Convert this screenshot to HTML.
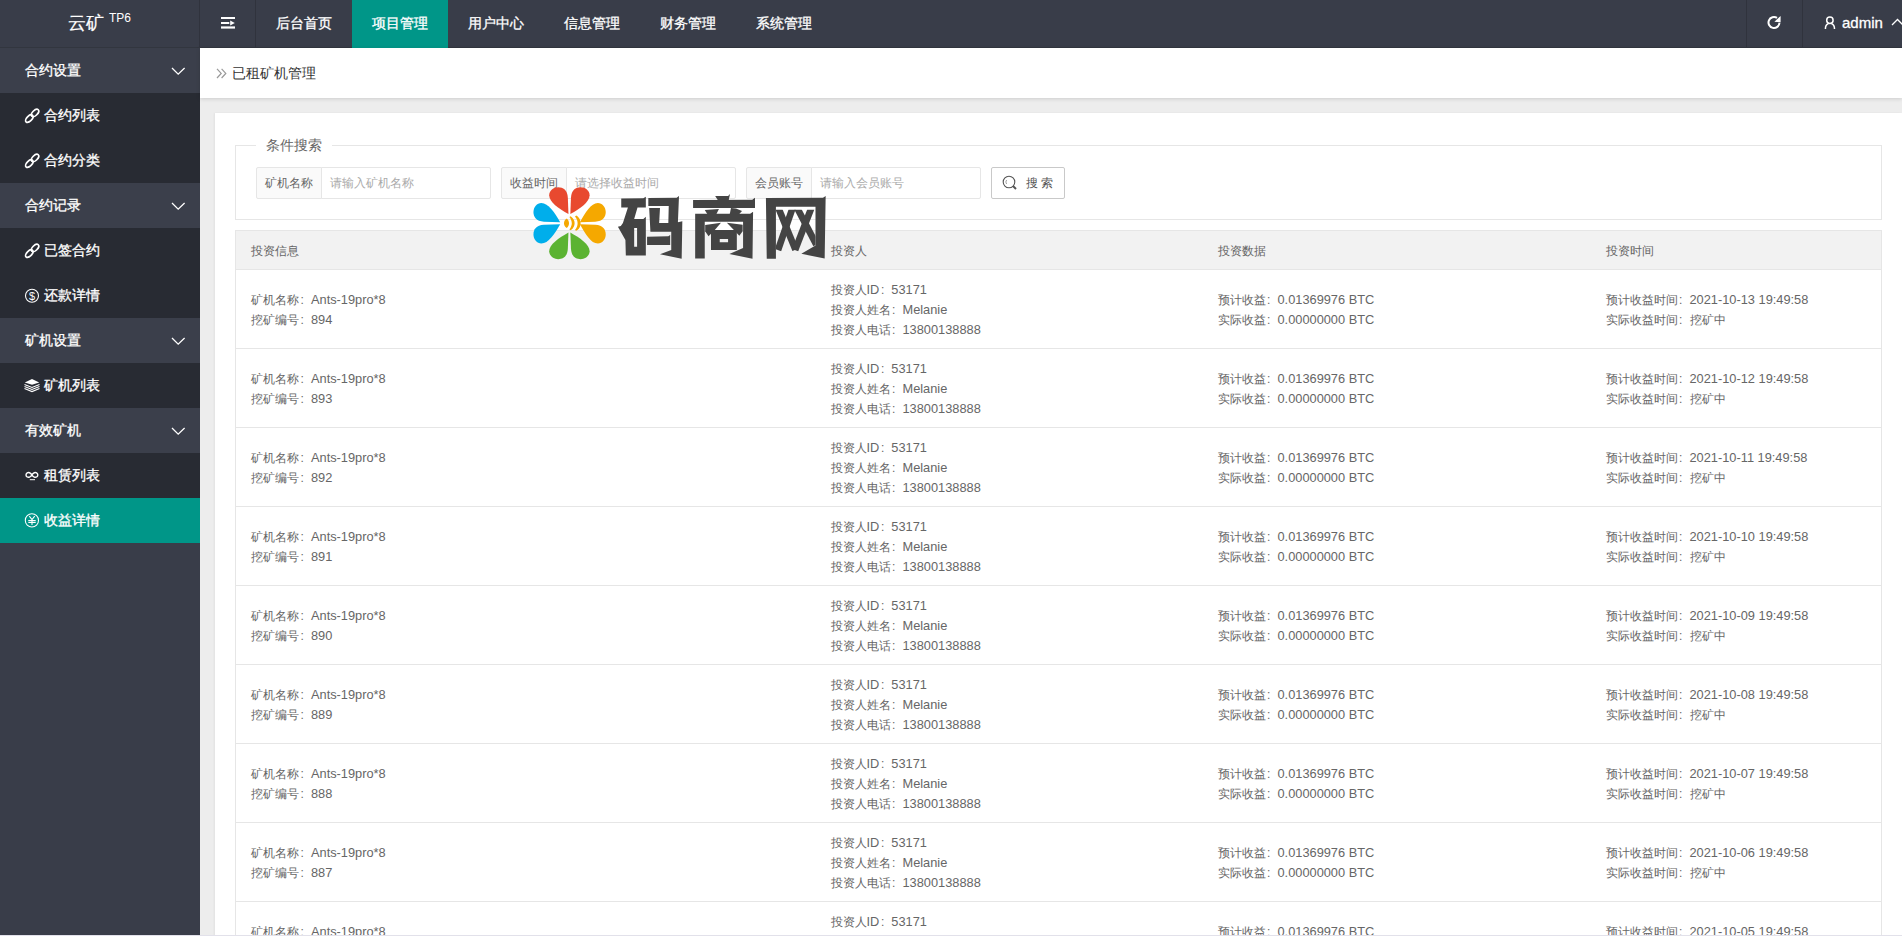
<!DOCTYPE html>
<html><head><meta charset="utf-8">
<style>
*{margin:0;padding:0;box-sizing:border-box}
html,body{width:1902px;height:936px;overflow:hidden}
body{position:relative;background:#EDEDED;font-family:"Liberation Sans",sans-serif;color:#666;font-size:12px}
.hdr{position:absolute;left:0;top:0;width:1902px;height:48px;background:#393D49;border-bottom:1px solid #32363F}
.logo{position:absolute;left:0;top:0;width:200px;height:47px;border-right:1px solid #30333D;color:#fff}
.logo .t{-webkit-text-stroke:0.2px #fff;position:absolute;left:68px;top:11.5px;font-size:18px;line-height:22px}
.logo .s{position:absolute;left:109px;top:11px;font-size:12px;line-height:14px}
.ham{position:absolute;left:200px;top:0;width:56px;height:47px;border-right:1px solid #30333D}
.nav{position:absolute;left:256px;top:0;height:47px}
.nav a{-webkit-text-stroke:0.3px #fff;position:absolute;top:0;height:48px;width:96px;color:#fff;font-size:14px;line-height:46px;text-align:center;text-decoration:none}
.nav a.on{background:#009688}
.rsep{position:absolute;top:0;width:1px;height:47px;background:#30333D}
.side{position:absolute;left:0;top:48px;width:200px;height:888px;background:#393D49}
.side .it{-webkit-text-stroke:0.3px #fff;position:absolute;left:0;width:200px;height:45px;color:#fff;font-size:14px;line-height:45px}
.side .p{background:#3B3F4B}
.side .c{background:#282B33}
.side .on{background:#009688}
.side .it span{position:absolute;left:25px;top:0}
.side .c span,.side .on span{left:44px}
.side .ic{position:absolute;left:25px;top:15px;width:15px;height:15px}
.side .chev{position:absolute;left:170.5px;top:19.3px}
.crumb{position:absolute;left:200px;top:48px;width:1702px;height:50px;background:#fff;box-shadow:0 1px 4px rgba(0,0,0,.14)}
.crumb .t{position:absolute;left:32px;top:16px;font-size:14px;line-height:18px;color:#333}
.card{position:absolute;left:215px;top:113px;width:1687px;height:830px;background:#fff;box-shadow:-1px 0 2px rgba(0,0,0,.05)}
.fs{position:absolute;left:20px;top:32px;width:1647px;height:75px;border:1px solid #e6e6e6}
.lg{position:absolute;left:20px;top:-11px;background:#fff;padding:0 10px;font-size:14px;line-height:20px;color:#666}
.grp{position:absolute;top:21px;height:32px}
.grp .lb{position:absolute;left:0;top:0;width:66px;height:32px;border:1px solid #e6e6e6;border-radius:2px 0 0 2px;background:#FAFAFA;font-size:12px;line-height:30px;color:#666;text-align:center}
.grp .in{position:absolute;left:65px;top:0;width:170px;height:32px;border:1px solid #e6e6e6;border-radius:0 2px 2px 0;background:#fff;font-size:12px;line-height:30px;color:#aaa;padding-left:8px}
.btn{position:absolute;left:755px;top:21px;width:74px;height:32px;border:1px solid #C9C9C9;border-radius:2px;background:#fff;font-size:12px;line-height:30px;color:#555}
table{position:absolute;left:20px;top:117px;width:1647px;border-collapse:collapse;table-layout:fixed;border:1px solid #e6e6e6}
th,td{border:0;border-bottom:1px solid #e6e6e6;text-align:left;font-weight:normal;padding:0 15px;font-size:12px;color:#666;vertical-align:middle}
th{height:39px;background:#F2F2F2;line-height:20px;padding-top:1px}
td{height:79px;line-height:20px;padding-top:1px}
.v{font-size:12.8px;line-height:13px}
.cl{display:inline-block;width:12px;padding-left:1.6px;font-size:12px;line-height:13px}
.wm{position:absolute;left:0;top:0}
</style></head><body>
<div class="hdr">
  <div class="logo"><span class="t">云矿</span><span class="s">TP6</span></div>
  <div class="ham"><svg style="position:absolute;left:21.2px;top:17px" width="15" height="12" viewBox="0 0 15 12"><rect x="0" y="0" width="14" height="2" fill="#fff"/><rect x="0" y="5" width="8.3" height="2" fill="#fff"/><rect x="0" y="9.4" width="14" height="2.2" fill="#fff"/><path d="M9.2 3.6 L13.8 6 L9.2 8.4Z" fill="#fff"/></svg></div>
  <div class="nav">
    <a style="left:0">后台首页</a><a class="on" style="left:96px">项目管理</a><a style="left:192px">用户中心</a><a style="left:288px">信息管理</a><a style="left:384px">财务管理</a><a style="left:480px">系统管理</a>
  </div>
  <div class="rsep" style="left:1746px"></div>
  <div class="rsep" style="left:1802px"></div>
  <svg style="position:absolute;left:1766px;top:15px" width="16" height="16" viewBox="0 0 16 16"><path d="M13.5,7.8 A5.5,5.5 0 1 1 11,2.9" fill="none" stroke="#fff" stroke-width="2"/><path d="M8.4,6.7 L14.6,0.9 L14.6,7.2Z" fill="#fff"/></svg>
  <svg style="position:absolute;left:1823px;top:15px" width="14" height="15" viewBox="0 0 14 15"><circle cx="6.9" cy="5.2" r="3.2" fill="none" stroke="#fff" stroke-width="1.5"/><path d="M2.4,14 C2.4,10.8 3.6,9.2 5.3,8.7 M8.5,8.7 C10.2,9.2 11.5,10.8 11.5,14" fill="none" stroke="#fff" stroke-width="1.5"/></svg>
  <span style="position:absolute;left:1842px;top:14px;font-size:15px;line-height:18px;color:#fff;-webkit-text-stroke:0.3px #fff">admin</span>
  <svg style="position:absolute;left:1891px;top:18px" width="12" height="8" viewBox="0 0 12 8"><path d="M1 7 L6.5 1.5 L12 7" fill="none" stroke="#fff" stroke-width="1.3"/></svg>
</div>
<div class="side">
  <div class="it p" style="top:0"><span>合约设置</span><svg class="chev" width="15" height="9" viewBox="0 0 15 9"><path d="M1 1 L7.2 7.2 L13.6 1" fill="none" stroke="#fff" stroke-width="1.3"/></svg></div>
  <div class="it c" style="top:45px"><svg class="ic" viewBox="0 0 15 15" style="overflow:visible"><g fill="none" stroke="#fff" stroke-width="1.7"><ellipse cx="10" cy="5" rx="4.6" ry="2.5" transform="rotate(-45 10 5)"/><ellipse cx="4.3" cy="10.6" rx="4.6" ry="2.5" transform="rotate(-45 4.3 10.6)"/></g></svg><span>合约列表</span></div>
  <div class="it c" style="top:90px"><svg class="ic" viewBox="0 0 15 15" style="overflow:visible"><g fill="none" stroke="#fff" stroke-width="1.7"><ellipse cx="10" cy="5" rx="4.6" ry="2.5" transform="rotate(-45 10 5)"/><ellipse cx="4.3" cy="10.6" rx="4.6" ry="2.5" transform="rotate(-45 4.3 10.6)"/></g></svg><span>合约分类</span></div>
  <div class="it p" style="top:135px"><span>合约记录</span><svg class="chev" width="15" height="9" viewBox="0 0 15 9"><path d="M1 1 L7.2 7.2 L13.6 1" fill="none" stroke="#fff" stroke-width="1.3"/></svg></div>
  <div class="it c" style="top:180px"><svg class="ic" viewBox="0 0 15 15" style="overflow:visible"><g fill="none" stroke="#fff" stroke-width="1.7"><ellipse cx="10" cy="5" rx="4.6" ry="2.5" transform="rotate(-45 10 5)"/><ellipse cx="4.3" cy="10.6" rx="4.6" ry="2.5" transform="rotate(-45 4.3 10.6)"/></g></svg><span>已签合约</span></div>
  <div class="it c" style="top:225px"><svg class="ic" viewBox="0 0 15 15" style="overflow:visible"><circle cx="7" cy="7.7" r="6.5" fill="none" stroke="#fff" stroke-width="1.1"/><text x="7" y="11.6" font-size="11" font-family="Liberation Sans" fill="#fff" text-anchor="middle">$</text></svg><span>还款详情</span></div>
  <div class="it p" style="top:270px"><span>矿机设置</span><svg class="chev" width="15" height="9" viewBox="0 0 15 9"><path d="M1 1 L7.2 7.2 L13.6 1" fill="none" stroke="#fff" stroke-width="1.3"/></svg></div>
  <div class="it c" style="top:315px"><svg class="ic" viewBox="0 0 15 15" style="overflow:visible"><path d="M-0.2,4.4 L7,1 L14.2,4.4 L7,6.8Z" fill="#fff"/><path d="M-0.5,6.4 L7,9.4 L14.5,6.4 M-0.5,8.5 L7,11.5 L14.5,8.5 M-0.5,10.6 L7,13.6 L14.5,10.6" fill="none" stroke="#fff" stroke-width="1.1"/></svg><span>矿机列表</span></div>
  <div class="it p" style="top:360px"><span>有效矿机</span><svg class="chev" width="15" height="9" viewBox="0 0 15 9"><path d="M1 1 L7.2 7.2 L13.6 1" fill="none" stroke="#fff" stroke-width="1.3"/></svg></div>
  <div class="it c" style="top:405px"><svg class="ic" viewBox="0 0 15 15" style="overflow:visible"><path d="M6.9,6.9 C5.6,4.6 3.4,4.2 2.2,4.9 C0.6,5.9 0.6,8 2.2,9 C3.4,9.7 5.6,9.2 6.9,6.9 C8.2,4.6 10.4,4.2 11.6,4.9 C13.2,5.9 13.2,8 11.6,9 C10.4,9.7 8.2,9.2 6.9,6.9Z" fill="none" stroke="#fff" stroke-width="1.4"/><path d="M4.8,11.7 H10" stroke="#fff" stroke-width="1"/></svg><span>租赁列表</span></div>
  <div class="it on" style="top:450px"><svg class="ic" viewBox="0 0 15 15" style="overflow:visible"><circle cx="6.9" cy="7.4" r="6.6" fill="none" stroke="#fff" stroke-width="1.05"/><path d="M4.3,3.2 L7,6.6 L9.7,3.2 M3.3,7.6 H10.7 M3.3,9.5 H10.7 M7,6.6 V11.9" fill="none" stroke="#fff" stroke-width="1.05"/></svg><span>收益详情</span></div>
</div>
<div class="crumb"><svg style="position:absolute;left:15.5px;top:20px" width="12" height="12" viewBox="0 0 12 12"><path d="M1 0.8 L5.2 5.4 L1 10 M5.6 0.8 L9.8 5.4 L5.6 10" fill="none" stroke="#999" stroke-width="1.2"/></svg><span class="t">已租矿机管理</span></div>
<div class="card">
  <div class="fs">
    <div class="lg">条件搜索</div>
    <div class="grp" style="left:20px"><div class="lb">矿机名称</div><div class="in">请输入矿机名称</div></div>
    <div class="grp" style="left:265px"><div class="lb">收益时间</div><div class="in">请选择收益时间</div></div>
    <div class="grp" style="left:510px"><div class="lb">会员账号</div><div class="in">请输入会员账号</div></div>
    <div class="btn"><svg style="position:absolute;left:10px;top:7px" width="16" height="16" viewBox="0 0 16 16"><circle cx="7" cy="7" r="5.8" fill="none" stroke="#555" stroke-width="1.1"/><path d="M11 11 L14 14" stroke="#555" stroke-width="2"/><path d="M4.6,5 A3.2,3.2 0 0 0 4.6,9" fill="none" stroke="#888" stroke-width="0.8"/></svg><span style="position:absolute;left:34px;top:0">搜 索</span></div>
  </div>
  <table>
    <colgroup><col style="width:580px"><col style="width:387px"><col style="width:388px"><col></colgroup>
    <tr><th>投资信息</th><th>投资人</th><th>投资数据</th><th>投资时间</th></tr>
<tr>
<td class="c1"><div>矿机名称<span class="cl">:</span><span class="v">Ants-19pro*8</span></div><div>挖矿编号<span class="cl">:</span><span class="v">894</span></div></td>
<td class="c2"><div>投资人<span class="v">ID</span><span class="cl">:</span><span class="v">53171</span></div><div>投资人姓名<span class="cl">:</span><span class="v">Melanie</span></div><div>投资人电话<span class="cl">:</span><span class="v">13800138888</span></div></td>
<td class="c3"><div>预计收益<span class="cl">:</span><span class="v">0.01369976 BTC</span></div><div>实际收益<span class="cl">:</span><span class="v">0.00000000 BTC</span></div></td>
<td class="c4"><div>预计收益时间<span class="cl">:</span><span class="v">2021-10-13 19:49:58</span></div><div>实际收益时间<span class="cl">:</span>挖矿中</div></td>
</tr>
<tr>
<td class="c1"><div>矿机名称<span class="cl">:</span><span class="v">Ants-19pro*8</span></div><div>挖矿编号<span class="cl">:</span><span class="v">893</span></div></td>
<td class="c2"><div>投资人<span class="v">ID</span><span class="cl">:</span><span class="v">53171</span></div><div>投资人姓名<span class="cl">:</span><span class="v">Melanie</span></div><div>投资人电话<span class="cl">:</span><span class="v">13800138888</span></div></td>
<td class="c3"><div>预计收益<span class="cl">:</span><span class="v">0.01369976 BTC</span></div><div>实际收益<span class="cl">:</span><span class="v">0.00000000 BTC</span></div></td>
<td class="c4"><div>预计收益时间<span class="cl">:</span><span class="v">2021-10-12 19:49:58</span></div><div>实际收益时间<span class="cl">:</span>挖矿中</div></td>
</tr>
<tr>
<td class="c1"><div>矿机名称<span class="cl">:</span><span class="v">Ants-19pro*8</span></div><div>挖矿编号<span class="cl">:</span><span class="v">892</span></div></td>
<td class="c2"><div>投资人<span class="v">ID</span><span class="cl">:</span><span class="v">53171</span></div><div>投资人姓名<span class="cl">:</span><span class="v">Melanie</span></div><div>投资人电话<span class="cl">:</span><span class="v">13800138888</span></div></td>
<td class="c3"><div>预计收益<span class="cl">:</span><span class="v">0.01369976 BTC</span></div><div>实际收益<span class="cl">:</span><span class="v">0.00000000 BTC</span></div></td>
<td class="c4"><div>预计收益时间<span class="cl">:</span><span class="v">2021-10-11 19:49:58</span></div><div>实际收益时间<span class="cl">:</span>挖矿中</div></td>
</tr>
<tr>
<td class="c1"><div>矿机名称<span class="cl">:</span><span class="v">Ants-19pro*8</span></div><div>挖矿编号<span class="cl">:</span><span class="v">891</span></div></td>
<td class="c2"><div>投资人<span class="v">ID</span><span class="cl">:</span><span class="v">53171</span></div><div>投资人姓名<span class="cl">:</span><span class="v">Melanie</span></div><div>投资人电话<span class="cl">:</span><span class="v">13800138888</span></div></td>
<td class="c3"><div>预计收益<span class="cl">:</span><span class="v">0.01369976 BTC</span></div><div>实际收益<span class="cl">:</span><span class="v">0.00000000 BTC</span></div></td>
<td class="c4"><div>预计收益时间<span class="cl">:</span><span class="v">2021-10-10 19:49:58</span></div><div>实际收益时间<span class="cl">:</span>挖矿中</div></td>
</tr>
<tr>
<td class="c1"><div>矿机名称<span class="cl">:</span><span class="v">Ants-19pro*8</span></div><div>挖矿编号<span class="cl">:</span><span class="v">890</span></div></td>
<td class="c2"><div>投资人<span class="v">ID</span><span class="cl">:</span><span class="v">53171</span></div><div>投资人姓名<span class="cl">:</span><span class="v">Melanie</span></div><div>投资人电话<span class="cl">:</span><span class="v">13800138888</span></div></td>
<td class="c3"><div>预计收益<span class="cl">:</span><span class="v">0.01369976 BTC</span></div><div>实际收益<span class="cl">:</span><span class="v">0.00000000 BTC</span></div></td>
<td class="c4"><div>预计收益时间<span class="cl">:</span><span class="v">2021-10-09 19:49:58</span></div><div>实际收益时间<span class="cl">:</span>挖矿中</div></td>
</tr>
<tr>
<td class="c1"><div>矿机名称<span class="cl">:</span><span class="v">Ants-19pro*8</span></div><div>挖矿编号<span class="cl">:</span><span class="v">889</span></div></td>
<td class="c2"><div>投资人<span class="v">ID</span><span class="cl">:</span><span class="v">53171</span></div><div>投资人姓名<span class="cl">:</span><span class="v">Melanie</span></div><div>投资人电话<span class="cl">:</span><span class="v">13800138888</span></div></td>
<td class="c3"><div>预计收益<span class="cl">:</span><span class="v">0.01369976 BTC</span></div><div>实际收益<span class="cl">:</span><span class="v">0.00000000 BTC</span></div></td>
<td class="c4"><div>预计收益时间<span class="cl">:</span><span class="v">2021-10-08 19:49:58</span></div><div>实际收益时间<span class="cl">:</span>挖矿中</div></td>
</tr>
<tr>
<td class="c1"><div>矿机名称<span class="cl">:</span><span class="v">Ants-19pro*8</span></div><div>挖矿编号<span class="cl">:</span><span class="v">888</span></div></td>
<td class="c2"><div>投资人<span class="v">ID</span><span class="cl">:</span><span class="v">53171</span></div><div>投资人姓名<span class="cl">:</span><span class="v">Melanie</span></div><div>投资人电话<span class="cl">:</span><span class="v">13800138888</span></div></td>
<td class="c3"><div>预计收益<span class="cl">:</span><span class="v">0.01369976 BTC</span></div><div>实际收益<span class="cl">:</span><span class="v">0.00000000 BTC</span></div></td>
<td class="c4"><div>预计收益时间<span class="cl">:</span><span class="v">2021-10-07 19:49:58</span></div><div>实际收益时间<span class="cl">:</span>挖矿中</div></td>
</tr>
<tr>
<td class="c1"><div>矿机名称<span class="cl">:</span><span class="v">Ants-19pro*8</span></div><div>挖矿编号<span class="cl">:</span><span class="v">887</span></div></td>
<td class="c2"><div>投资人<span class="v">ID</span><span class="cl">:</span><span class="v">53171</span></div><div>投资人姓名<span class="cl">:</span><span class="v">Melanie</span></div><div>投资人电话<span class="cl">:</span><span class="v">13800138888</span></div></td>
<td class="c3"><div>预计收益<span class="cl">:</span><span class="v">0.01369976 BTC</span></div><div>实际收益<span class="cl">:</span><span class="v">0.00000000 BTC</span></div></td>
<td class="c4"><div>预计收益时间<span class="cl">:</span><span class="v">2021-10-06 19:49:58</span></div><div>实际收益时间<span class="cl">:</span>挖矿中</div></td>
</tr>
<tr>
<td class="c1"><div>矿机名称<span class="cl">:</span><span class="v">Ants-19pro*8</span></div><div>挖矿编号<span class="cl">:</span><span class="v">886</span></div></td>
<td class="c2"><div>投资人<span class="v">ID</span><span class="cl">:</span><span class="v">53171</span></div><div>投资人姓名<span class="cl">:</span><span class="v">Melanie</span></div><div>投资人电话<span class="cl">:</span><span class="v">13800138888</span></div></td>
<td class="c3"><div>预计收益<span class="cl">:</span><span class="v">0.01369976 BTC</span></div><div>实际收益<span class="cl">:</span><span class="v">0.00000000 BTC</span></div></td>
<td class="c4"><div>预计收益时间<span class="cl">:</span><span class="v">2021-10-05 19:49:58</span></div><div>实际收益时间<span class="cl">:</span>挖矿中</div></td>
</tr>
  </table>
</div>
<svg class="wm" width="1902" height="936" style="position:absolute;left:0;top:0">
<path d="M568.46,213.96L567.84,197.76C567.40,189.90 563.03,187.25 558.20,187.25C553.40,187.25 549.20,190.80 549.20,195.13C549.20,202.14 558.65,208.27 568.46,213.96Z" fill="#E8492F"/>
<path d="M570.34,213.96L570.96,197.76C571.40,189.90 575.77,187.25 580.60,187.25C585.40,187.25 589.60,190.80 589.60,195.13C589.60,202.14 580.15,208.27 570.34,213.96Z" fill="#E8492F"/>
<path d="M579.94,222.26L595.24,221.64C603.10,221.20 605.75,216.83 605.75,212.00C605.75,207.20 602.20,203.00 597.87,203.00C590.86,203.00 585.63,212.45 579.94,222.26Z" fill="#F5A800"/>
<path d="M579.94,224.14L595.24,224.76C603.10,225.20 605.75,229.57 605.75,234.40C605.75,239.20 602.20,243.40 597.87,243.40C590.86,243.40 585.63,233.95 579.94,224.14Z" fill="#F5A800"/>
<path d="M560.16,222.26L543.96,221.64C536.10,221.20 533.45,216.83 533.45,212.00C533.45,207.20 537.00,203.00 541.33,203.00C548.34,203.00 554.47,212.45 560.16,222.26Z" fill="#00AEEB"/>
<path d="M560.16,224.14L543.96,224.76C536.10,225.20 533.45,229.57 533.45,234.40C533.45,239.20 537.00,243.40 541.33,243.40C548.34,243.40 554.47,233.95 560.16,224.14Z" fill="#00AEEB"/>
<path d="M568.46,232.44L567.84,248.64C567.40,256.50 563.03,259.15 558.20,259.15C553.40,259.15 549.20,255.60 549.20,251.27C549.20,244.26 558.65,238.13 568.46,232.44Z" fill="#5BB332"/>
<path d="M570.34,232.44L570.96,248.64C571.40,256.50 575.77,259.15 580.60,259.15C585.40,259.15 589.60,255.60 589.60,251.27C589.60,244.26 580.15,238.13 570.34,232.44Z" fill="#5BB332"/>
<path d="M566.8,218.6 C568.6,220.5 569,222 569,223.2 C569,224.6 568.6,226.2 566.8,228 C564.6,226.5 564,224.8 564,223.2 C564,221.8 564.6,220 566.8,218.6Z" fill="#F5A800"/>
<path d="M570.6,216.2 C573.8,218.2 574.6,221 574.6,223.2 C574.6,225.5 573.8,228.2 570.6,230.2 L569.4,229.4 C571,227.4 571.8,225.2 571.8,223.2 C571.8,221.3 571,219 569.4,217Z" fill="#F5A800"/>
<path d="M576.2,215.6 C579.8,217.6 580.6,221 580.6,223.2 C580.6,225.5 579.8,228.8 576.2,230.8 L575,230 C577,227.6 577.6,225.2 577.6,223.2 C577.6,221.2 577,218.8 575,216.4Z" fill="#F5A800"/>
<g fill="#444">
<g transform="translate(610,188) scale(0.08333)">
<path fill-rule="evenodd" d="M135,125 L400,122 L430,106 L430,235 L330,235 L290,372 L400,372 L430,345 L430,810 L190,810 L185,625 L95,465 L130,455 L155,420 L215,235 L135,235Z M290,480 L325,480 L325,705 L290,705Z"/>
<path d="M460,120 L800,118 L828,95 L815,410 L868,398 L860,850 L600,795 L735,745 L735,525 L485,525 L470,240 L600,240 L590,420 L700,420 L705,215 L460,215Z"/>
<path d="M445,585 L700,580 L722,563 L722,685 L445,685Z"/>
</g>
<g transform="translate(686,188) scale(0.08333)">
<path d="M350,95 L505,95 L528,72 L512,150 L385,150Z"/>
<path d="M85,145 L795,142 L828,118 L828,240 L85,240Z"/>
<path d="M225,265 L395,252 L365,312 L255,312Z"/>
<path d="M540,240 L600,245 L672,275 L640,312 L525,312Z"/>
<path d="M110,310 L770,310 L805,285 L798,850 L520,792 L685,720 L685,405 L225,405 L225,845 L110,845Z"/>
<path d="M230,445 L420,418 L345,505 L270,578 L230,520Z"/>
<path d="M490,418 L680,440 L680,520 L640,572 L575,505Z"/>
<path fill-rule="evenodd" d="M300,505 L610,505 L610,745 L300,745Z M405,612 L505,612 L505,650 L405,650Z"/>
</g>
<g transform="translate(758,188) scale(0.08333)">
<path d="M95,120 L780,118 L812,95 L800,845 L520,790 L690,690 L690,225 L215,225 L215,850 L105,850Z"/>
<clipPath id="wc"><rect x="215" y="262" width="475" height="500"/></clipPath>
<g clip-path="url(#wc)" stroke="#444" stroke-width="80">
<line x1="245" y1="240" x2="450" y2="740"/>
<line x1="415" y1="240" x2="240" y2="745"/>
<line x1="470" y1="240" x2="700" y2="680"/>
<line x1="640" y1="240" x2="445" y2="745"/>
</g>
</g>
</g>
</svg>
<div style="position:absolute;left:0;top:935px;width:1902px;height:1px;background:#E2E1EA"></div>
</body></html>
